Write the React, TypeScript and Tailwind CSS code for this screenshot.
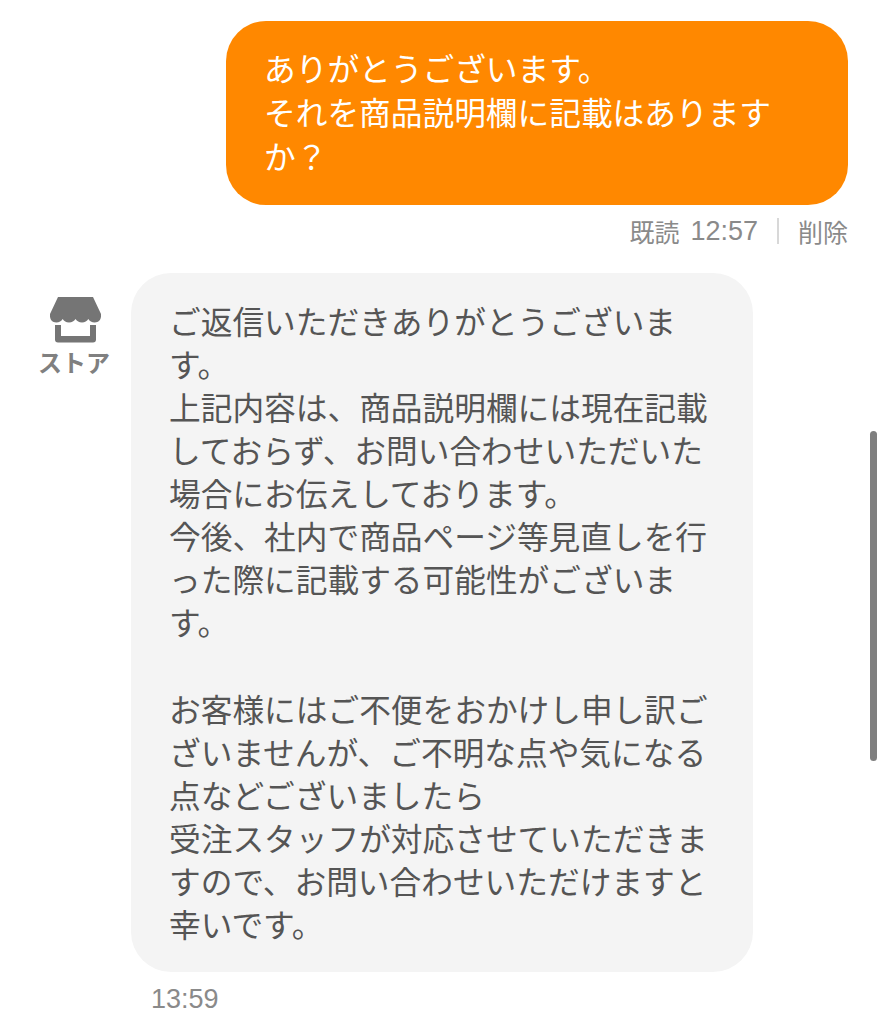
const jp = "font-['Noto_Sans_CJK_JP','Noto_Sans_CJK_SC',sans-serif]";
const num = "font-['Liberation_Sans',sans-serif] text-[27px]";

const StoreIcon = () => (
  <svg width="51" height="46" viewBox="0 0 51 46" fill="#757575" className="block">
    <path d="M8 0h35l8 17c0.500 4-1 8.500-6.300 8.500-3 0-5-1.500-6.400-3.500-1.400 2-3.400 3.500-6.300 3.500s-5-1.500-6.500-3.500c-1.500 2-3.500 3.500-6.500 3.500s-4.900-1.500-6.300-3.500c-1.400 2-3.400 3.500-6.400 3.500C1 25.500-0.500 21 0 17z" />
    <path d="M5 28h6v11h29V28h6v14.500a3 3 0 0 1-3 3H8a3 3 0 0 1-3-3z" />
  </svg>
);

export default function App() {
  return (
    <div className={`${jp} relative h-[1024px] w-[883px] overflow-hidden bg-white`}>
      <div className="flex flex-col pt-[21px] pr-[35px]">
        <div className="flex justify-end">
          <div className="w-[622px] rounded-[40px] bg-[#ff8800] pt-[24px] pr-[30px] pb-[28px] pl-[38px] text-[31.7px] leading-[44px] text-white">
            ありがとうございます。
            <br />
            それを商品説明欄に記載はあります
            <br />
            か？
          </div>
        </div>
        <div className="mt-[7px] flex items-center justify-end text-[25px] leading-[38px] text-[#8a8a8a]">
          <span>既読</span>
          <span className={`ml-[11px] ${num}`}>12:57</span>
          <span className="mr-[19px] ml-[19px] h-[26px] w-[2px] bg-[#d8d8d8]" />
          <span>削除</span>
        </div>
        <div className="mt-[23px] flex items-start pl-[38px]">
          <div className="flex w-[93px] flex-col items-start pt-[24px]">
            <div className="pl-[12px]">
              <StoreIcon />
            </div>
            <span className="mt-[3px] text-[24px] leading-[32px] font-bold text-[#808080]">ストア</span>
          </div>
          <div className="w-[622px] rounded-[40px] bg-[#f4f4f4] pt-[26px] pr-[30px] pb-[27px] pl-[38px] text-[31.7px] leading-[43.07px] text-[#555555]">
            ご返信いただきありがとうございま
            <br />
            す。
            <br />
            上記内容は、商品説明欄には現在記載
            <br />
            しておらず、お問い合わせいただいた
            <br />
            場合にお伝えしております。
            <br />
            今後、社内で商品ページ等見直しを行
            <br />
            った際に記載する可能性がございま
            <br />
            す。
            <br />
            <br />
            お客様にはご不便をおかけし申し訳ご
            <br />
            ざいませんが、ご不明な点や気になる
            <br />
            点などございましたら
            <br />
            受注スタッフが対応させていただきま
            <br />
            すので、お問い合わせいただけますと
            <br />
            幸いです。
          </div>
        </div>
        <div className={`mt-[9px] pl-[151px] leading-[36px] text-[#8a8a8a] ${num}`}>13:59</div>
      </div>
      <div className="absolute top-[431px] right-[6px] h-[330px] w-[7px] rounded-full bg-[#7f7f7f]" />
    </div>
  );
}
